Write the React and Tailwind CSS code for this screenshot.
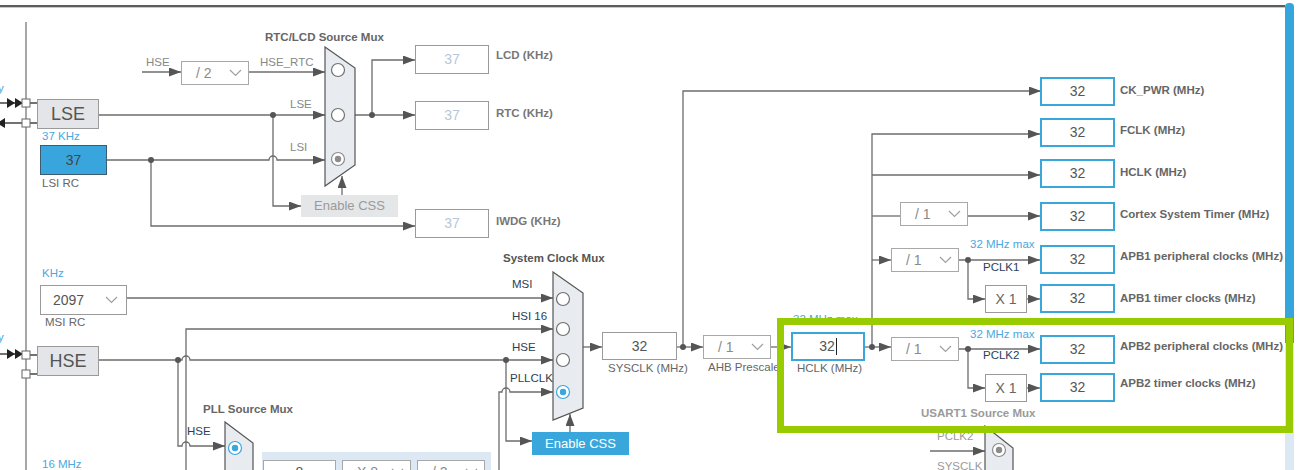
import React from "react";

const WIRE = "#6c6c6c";

const WIRES = [
  // RTC / LCD part
  "M142,72 H181",
  "M249,72 H325",
  "M99,115 H325",
  "M107,160 H269 A4,4 0 0 1 277,160 H325",
  "M273,115 V206 H301",
  "M151,160 V226 H415",
  "M342,195 V176",
  "M355,115 H415",
  "M372,115 V60 H415",
  // system clock part
  "M127,298 H553",
  "M186,470 V329 H553",
  "M99,360 H182 A4,4 0 0 1 190,360 H553",
  "M178,360 V446 H182 A4,4 0 0 1 190,446 H225",
  "M499,470 V392 H502 A4,4 0 0 1 510,392 H553",
  "M506,360 V441 H532",
  "M570,432 V414",
  "M583,347 H602",
  "M676,347 H703",
  "M683,347 V91 H1041",
  "M771,347 H791",
  "M865,347 H891",
  "M872,347 V134 H1040",
  "M872,175 H1040",
  "M968,216 H1040",
  "M872,260 H891",
  "M958,260 H1040",
  "M968,260 V299 H985",
  "M1027,299 H1040",
  "M958,349 H1040",
  "M968,349 V388 H985",
  "M1027,388 H1040",
  "M930,451 H985",
];

const DOTS = [
  [273, 115], [151, 160], [372, 115], [178, 360], [506, 360],
  [683, 347], [872, 347], [968, 260], [968, 349],
];

function Chevron() {
  return (
    <svg width="13" height="8" viewBox="0 0 13 8" className="shrink-0">
      <polyline points="1,1 6.5,6.5 12,1" fill="none" stroke="#a0a0a0" strokeWidth="1.2" />
    </svg>
  );
}

function Select({ className, value }) {
  return (
    <div
      className={`absolute flex items-center justify-between border border-[#a8a8a8] bg-white pl-[14px] pr-[6px] text-[14px] text-[#8a8a8a] ${className}`}
    >
      <span>{value}</span>
      <Chevron />
    </div>
  );
}

function OutBox({ className, children }) {
  return (
    <div
      className={`absolute flex h-[29px] w-[75px] items-center justify-center border-2 border-[#3aa7dc] bg-white text-[14px] text-[#555] ${className}`}
    >
      {children}
    </div>
  );
}

function Radio({ x, y, on, blue }) {
  const c = blue ? "#3aa7dc" : "#8c8c8c";
  return (
    <g>
      <circle cx={x} cy={y} r="6.5" fill="white" stroke={on ? c : "#707070"} strokeWidth="1.2" />
      {on && <circle cx={x} cy={y} r="3.2" fill={c} />}
    </g>
  );
}

function Wires() {
  return (
    <svg className="absolute left-0 top-0" width="1285" height="470">
      <defs>
        <marker
          id="ah"
          viewBox="0 0 12 9"
          refX="12"
          refY="4.5"
          markerWidth="12"
          markerHeight="9"
          markerUnits="userSpaceOnUse"
          orient="auto"
        >
          <path d="M0,0 L12,4.5 L0,9 z" fill="#555" />
        </marker>
      </defs>

      {/* left edge */}
      <path d="M26,22 V470" stroke={WIRE} strokeWidth="1.2" fill="none" />
      <path d="M0,103 H23 M4,123 H23 M0,354 H23 M30,103 H37 M30,123 H37 M30,355 H37 M30,374 H37" stroke="#444" strokeWidth="1.4" fill="none" />
      <path d="M7,98 L15,103 L7,108 z M15,98 L23,103 L15,108 z" fill="#222" />
      <path d="M5,118 L-3,123 L5,128 z" fill="#222" />
      <path d="M7,349 L15,354 L7,359 z M15,349 L23,354 L15,359 z" fill="#222" />
      <rect x="22" y="99" width="8" height="8" fill="white" stroke="#666" />
      <rect x="22" y="119" width="8" height="8" fill="white" stroke="#666" />
      <rect x="22" y="351" width="8" height="8" fill="white" stroke="#666" />
      <rect x="22" y="370" width="8" height="8" fill="white" stroke="#666" />

      {WIRES.map((d) => (
        <path key={d} d={d} stroke={WIRE} strokeWidth="1.3" fill="none" markerEnd="url(#ah)" />
      ))}
      <path d="M872,216 H900" stroke={WIRE} strokeWidth="1.3" fill="none" />

      {DOTS.map(([x, y]) => (
        <circle key={`${x}-${y}`} cx={x} cy={y} r="3" fill="#555" />
      ))}

      {/* muxes */}
      <polygon points="325,47 355,68 355,165 325,186" fill="#e8ebef" stroke="#555" strokeWidth="1.2" />
      <Radio x={338} y={70} />
      <Radio x={338} y={115} />
      <Radio x={338} y={159} on />

      <polygon points="553,272 583,293 583,408 553,420" fill="#e8ebef" stroke="#555" strokeWidth="1.2" />
      <Radio x={563} y={299} />
      <Radio x={563} y={329} />
      <Radio x={563} y={360} />
      <Radio x={563} y={392} on blue />

      <polygon points="225,422 253,443 253,476 225,476" fill="#e8ebef" stroke="#555" strokeWidth="1.2" />
      <Radio x={235} y={448} on blue />

      <polygon points="985,426 1013,448 1013,476 985,476" fill="#e8ebef" stroke="#555" strokeWidth="1.2" />
      <Radio x={999} y={450} on />
    </svg>
  );
}

export default function App() {
  return (
    <div className="relative flex h-[470px] w-[1303px] overflow-hidden bg-white font-['Liberation_Sans',Arial,sans-serif]">
      {/* diagram canvas */}
      <div className="relative h-full w-[1285px]">
        <div className="h-[5px]" />
        <div className="h-[2px] bg-[#5c5c5c]" />
        <div className="h-px bg-[#c9c9c9]" />

        <Wires />

        {/* light blue side texts */}
        <div className="absolute left-[-2px] top-[81px] text-[11.5px] leading-[14px] text-[#4aa8e0]">y</div>
        <div className="absolute left-[-2px] top-[330px] text-[11.5px] leading-[14px] text-[#4aa8e0]">y</div>

        {/* LSE / LSI */}
        <div className="absolute left-[37px] top-[99px] flex h-[30px] w-[62px] items-center justify-center border border-[#9a9a9a] bg-[#e3e5e8] text-[18px] text-[#555]">
          LSE
        </div>
        <div className="absolute left-[42px] top-[129px] text-[11.5px] leading-[14px] text-[#4aa8e0]">37 KHz</div>
        <div className="absolute left-[40px] top-[145px] flex h-[30px] w-[67px] items-center justify-center border border-[#3b5c70] bg-[#38a6dc] text-[14px] text-[#444]">
          37
        </div>
        <div className="absolute left-[42px] top-[176px] text-[11.5px] leading-[14px] text-[#666]">LSI RC</div>

        {/* RTC mux area */}
        <div className="absolute left-[265px] top-[30px] text-[11.5px] font-bold leading-[14px] text-[#666]">
          RTC/LCD Source Mux
        </div>
        <div className="absolute left-[146px] top-[55px] text-[11.5px] leading-[14px] text-[#888]">HSE</div>
        <div className="absolute left-[260px] top-[55px] text-[11.5px] leading-[14px] text-[#888]">HSE_RTC</div>
        <div className="absolute left-[290px] top-[97px] text-[11.5px] leading-[14px] text-[#888]">LSE</div>
        <div className="absolute left-[290px] top-[140px] text-[11.5px] leading-[14px] text-[#888]">LSI</div>
        <Select className="left-[181px] top-[61px] h-[24px] w-[68px]" value="/ 2" />
        <div className="absolute left-[301px] top-[195px] flex h-[22px] w-[97px] items-center justify-center bg-[#e4e6e8] text-[13px] text-[#9a9a9a]">
          Enable CSS
        </div>

        {/* RTC outputs */}
        {[
          ["top-[45px]", "top-[48px]", "LCD (KHz)"],
          ["top-[101px]", "top-[106px]", "RTC (KHz)"],
          ["top-[209px]", "top-[214px]", "IWDG (KHz)"],
        ].map(([t, lt, label]) => (
          <React.Fragment key={label}>
            <div className={`absolute left-[415px] flex h-[29px] w-[74px] items-center justify-center border border-[#9a9a9a] bg-white text-[14px] text-[#b5c7dd] ${t}`}>
              37
            </div>
            <div className={`absolute left-[496px] text-[11.5px] font-bold leading-[14px] text-[#777] ${lt}`}>{label}</div>
          </React.Fragment>
        ))}

        {/* MSI / HSE sources */}
        <div className="absolute left-[42px] top-[266px] text-[11.5px] leading-[14px] text-[#4aa8e0]">KHz</div>
        <div className="absolute left-[40px] top-[285px] flex h-[30px] w-[87px] items-center justify-between border border-[#9a9a9a] bg-white pl-[12px] pr-[8px] text-[14px] text-[#555]">
          <span>2097</span>
          <Chevron />
        </div>
        <div className="absolute left-[45px] top-[315px] text-[11.5px] leading-[14px] text-[#666]">MSI RC</div>
        <div className="absolute left-[37px] top-[346px] flex h-[30px] w-[62px] items-center justify-center border border-[#9a9a9a] bg-[#e3e5e8] text-[18px] text-[#555]">
          HSE
        </div>
        <div className="absolute left-[42px] top-[457px] text-[11.5px] leading-[14px] text-[#4aa8e0]">16 MHz</div>

        {/* PLL */}
        <div className="absolute left-[203px] top-[402px] text-[11.5px] font-bold leading-[14px] text-[#666]">
          PLL Source Mux
        </div>
        <div className="absolute left-[187px] top-[424px] text-[11.5px] leading-[14px] text-[#2c3e55]">HSE</div>
        <div className="absolute left-[262px] top-[452px] flex h-[30px] w-[229px] gap-[6px] bg-[#dce9f5] pl-px pt-[8px]">
          <div className="flex h-[24px] w-[73px] items-center justify-center border border-[#a8a8a8] bg-white text-[14px] text-[#555]">
            8
          </div>
          <div className="flex h-[24px] w-[69px] items-center justify-between border border-[#a8a8a8] bg-white pl-[14px] pr-[6px] text-[14px] text-[#888]">
            <span>X 8</span>
            <Chevron />
          </div>
          <div className="flex h-[24px] w-[68px] items-center justify-between border border-[#a8a8a8] bg-white pl-[14px] pr-[6px] text-[14px] text-[#888]">
            <span>/ 2</span>
            <Chevron />
          </div>
        </div>

        {/* System clock mux */}
        <div className="absolute left-[503px] top-[251px] text-[11.5px] font-bold leading-[14px] text-[#555]">
          System Clock Mux
        </div>
        <div className="absolute left-[512px] top-[277px] text-[11.5px] leading-[14px] text-[#2c3e55]">MSI</div>
        <div className="absolute left-[512px] top-[309px] text-[11.5px] leading-[14px] text-[#2c3e55]">HSI 16</div>
        <div className="absolute left-[512px] top-[340px] text-[11.5px] leading-[14px] text-[#2c3e55]">HSE</div>
        <div className="absolute left-[510px] top-[371px] text-[11.5px] leading-[14px] text-[#2c3e55]">PLLCLK</div>
        <div className="absolute left-[532px] top-[432px] flex h-[23px] w-[97px] items-center justify-center bg-[#3aa7dc] text-[13px] text-white">
          Enable CSS
        </div>

        {/* SYSCLK / AHB / HCLK */}
        <div className="absolute left-[602px] top-[332px] flex h-[28px] w-[75px] items-center justify-center border border-[#9a9a9a] bg-white text-[14px] text-[#555]">
          32
        </div>
        <div className="absolute left-[608px] top-[361px] text-[11.5px] leading-[14px] text-[#666]">SYSCLK (MHz)</div>
        <Select className="left-[703px] top-[335px] h-[24px] w-[68px]" value="/ 1" />
        <div className="absolute left-[708px] top-[360px] text-[11.5px] leading-[14px] text-[#666]">AHB Prescaler</div>
        <div className="absolute left-[793px] top-[312px] text-[11.5px] leading-[14px] text-[#4aa8e0]">32 MHz max</div>
        <div className="absolute left-[791px] top-[332px] flex h-[29px] w-[74px] items-center justify-center border-2 border-[#3aa7dc] bg-white text-[14px] text-[#555]">
          <span>32</span>
          <span className="ml-px h-[17px] w-px bg-[#222]" />
        </div>
        <div className="absolute left-[797px] top-[361px] text-[11.5px] leading-[14px] text-[#666]">HCLK (MHz)</div>

        {/* AHB outputs */}
        <Select className="left-[900px] top-[202px] h-[24px] w-[68px]" value="/ 1" />
        <Select className="left-[891px] top-[248px] h-[24px] w-[68px]" value="/ 1" />
        <Select className="left-[891px] top-[337px] h-[24px] w-[68px]" value="/ 1" />
        <div className="absolute left-[970px] top-[237px] text-[11.5px] leading-[14px] text-[#4aa8e0]">32 MHz max</div>
        <div className="absolute left-[983px] top-[260px] text-[11.5px] leading-[14px] text-[#2c3e55]">PCLK1</div>
        <div className="absolute left-[970px] top-[327px] text-[11.5px] leading-[14px] text-[#4aa8e0]">32 MHz max</div>
        <div className="absolute left-[983px] top-[348px] text-[11.5px] leading-[14px] text-[#2c3e55]">PCLK2</div>
        <div className="absolute left-[985px] top-[285px] flex h-[28px] w-[42px] items-center justify-center border border-[#9a9a9a] bg-white text-[14px] text-[#666]">
          X 1
        </div>
        <div className="absolute left-[985px] top-[374px] flex h-[28px] w-[42px] items-center justify-center border border-[#9a9a9a] bg-white text-[14px] text-[#666]">
          X 1
        </div>
        <div className="absolute left-[921px] top-[406px] text-[11.5px] font-bold leading-[14px] text-[#9a9a9a]">
          USART1 Source Mux
        </div>
        <div className="absolute left-[937px] top-[429px] text-[11.5px] leading-[14px] text-[#9a9a9a]">PCLK2</div>
        <div className="absolute left-[937px] top-[459px] text-[11.5px] leading-[14px] text-[#9a9a9a]">SYSCLK</div>

        <OutBox className="left-[1040px] top-[77px]">32</OutBox>
        <OutBox className="left-[1040px] top-[118px]">32</OutBox>
        <OutBox className="left-[1040px] top-[159px]">32</OutBox>
        <OutBox className="left-[1040px] top-[202px]">32</OutBox>
        <OutBox className="left-[1040px] top-[245px]">32</OutBox>
        <OutBox className="left-[1040px] top-[284px]">32</OutBox>
        <OutBox className="left-[1040px] top-[335px]">32</OutBox>
        <OutBox className="left-[1040px] top-[373px]">32</OutBox>

        <div className="absolute left-[1120px] top-[83px] text-[11.5px] font-bold leading-[14px] text-[#666]">CK_PWR (MHz)</div>
        <div className="absolute left-[1120px] top-[123px] text-[11.5px] font-bold leading-[14px] text-[#666]">FCLK (MHz)</div>
        <div className="absolute left-[1120px] top-[165px] text-[11.5px] font-bold leading-[14px] text-[#666]">HCLK (MHz)</div>
        <div className="absolute left-[1120px] top-[207px] text-[11.5px] font-bold leading-[14px] text-[#666]">Cortex System Timer (MHz)</div>
        <div className="absolute left-[1120px] top-[249px] whitespace-nowrap text-[11.5px] font-bold leading-[14px] text-[#666]">APB1 peripheral clocks (MHz)</div>
        <div className="absolute left-[1120px] top-[291px] text-[11.5px] font-bold leading-[14px] text-[#666]">APB1 timer clocks (MHz)</div>
        <div className="absolute left-[1120px] top-[339px] whitespace-nowrap text-[11.5px] font-bold leading-[14px] text-[#666]">APB2 peripheral clocks (MHz)</div>
        <div className="absolute left-[1120px] top-[376px] text-[11.5px] font-bold leading-[14px] text-[#666]">APB2 timer clocks (MHz)</div>
      </div>

      {/* scrollbar */}
      <div className="flex w-[9px] flex-col pt-[3px]">
        <div className="h-[340px] rounded-t-[4px] bg-[#35a6dc]" />
        <div className="flex-1 bg-[#dce9f4]" />
      </div>

      {/* highlight */}
      <div className="absolute left-[777px] top-[318px] h-[115px] w-[516px] border-[7px] border-[#99cc00]" />
    </div>
  );
}
